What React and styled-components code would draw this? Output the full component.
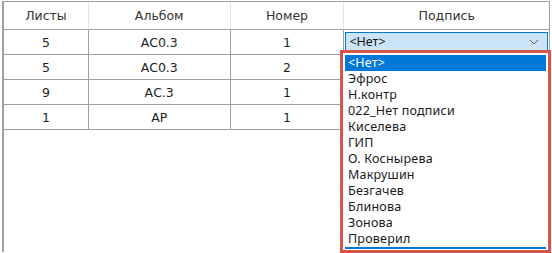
import styled, { createGlobalStyle } from 'styled-components'

const GlobalStyle = createGlobalStyle`
    html, body {
        margin: 0;
        padding: 0;
        background: #ffffff;
    }
    body {
        font-family: 'DejaVu Sans', 'Liberation Sans', sans-serif;
        color: #222222;
    }
`

const columns = [
    { key: 'sheets', title: 'Листы', width: 85 },
    { key: 'album', title: 'Альбом', width: 142 },
    { key: 'number', title: 'Номер', width: 114 },
    { key: 'sign', title: 'Подпись', width: 206 },
]

const rows = [
    { sheets: '5', album: 'АС0.3', number: '1' },
    { sheets: '5', album: 'АС0.3', number: '2' },
    { sheets: '9', album: 'АС.3', number: '1' },
    { sheets: '1', album: 'АР', number: '1' },
]

const options = [
    '<Нет>',
    'Эфрос',
    'Н.контр',
    '022_Нет подписи',
    'Киселева',
    'ГИП',
    'О. Коснырева',
    'Макрушин',
    'Безгачев',
    'Блинова',
    'Зонова',
    'Проверил',
]

const Chevron = () => (
    <svg width="10" height="6" viewBox="0 0 10 6">
        <path d="M1 1 L5 5 L9 1" fill="none" stroke="#5a5a5a" strokeWidth="1" />
    </svg>
)

export default function App() {
    return (
        <>
            <GlobalStyle />
            <Page>
                <Grid>
                    <Row>
                        {columns.map((c, i) => (
                            <HeadCell key={c.key} $w={c.width} $last={i === columns.length - 1}>
                                {c.title}
                            </HeadCell>
                        ))}
                    </Row>
                    {rows.map((r, ri) => (
                        <Row key={ri}>
                            <Cell $w={85}>{r.sheets}</Cell>
                            <Cell $w={142}>{r.album}</Cell>
                            <Cell $w={114}>{r.number}</Cell>
                            <Cell $w={206} $last>
                                {ri === 0 && (
                                    <Select>
                                        <span>&lt;Нет&gt;</span>
                                        <Chevron />
                                    </Select>
                                )}
                            </Cell>
                        </Row>
                    ))}
                </Grid>
                <Dropdown>
                    <List>
                        {options.map((o, i) => (
                            <Option key={o} $active={i === 0}>{o}</Option>
                        ))}
                    </List>
                </Dropdown>
            </Page>
        </>
    )
}

const Page = styled.div`
    position: relative;
    width: 550px;
    height: 253px;
    box-sizing: border-box;
    padding: 1px 0 0 2px;
`
const Grid = styled.div`
    display: flex;
    flex-direction: column;
    border-left: 2px solid #a0a0a0;
    border-top: 1px solid #a0a0a0;
    height: 251px;
    box-sizing: border-box;
`
const Row = styled.div`
    display: flex;
    &:first-child > div {
        height: 28px;
        border-bottom: 1px solid #a0a0a0;
    }
`
const HeadCell = styled.div`
    width: ${p => p.$w}px;
    box-sizing: border-box;
    display: flex;
    align-items: center;
    justify-content: center;
    font-size: 12.5px;
    color: #333333;
    border-right: 1px solid ${p => (p.$last ? '#a0a0a0' : '#e4e4e4')};
`
const Cell = styled.div`
    width: ${p => p.$w}px;
    height: 25px;
    box-sizing: border-box;
    display: flex;
    align-items: center;
    justify-content: center;
    font-size: 12.5px;
    color: #1e1e1e;
    border-right: 1px solid #a0a0a0;
    border-bottom: 1px solid #a0a0a0;
    padding: 1px;
`
const Select = styled.div`
    flex: 1;
    height: 19px;
    align-self: flex-start;
    margin-top: 1px;
    box-sizing: border-box;
    display: flex;
    align-items: center;
    justify-content: space-between;
    padding: 0 8px 0 3px;
    background: #cce4f7;
    border: 1px solid #0078d7;
    font-family: 'Noto Sans', 'Open Sans', sans-serif;
    font-size: 12.5px;
    color: #111111;
`
const Dropdown = styled.div`
    position: absolute;
    left: 340px;
    top: 50px;
    width: 211px;
    height: 203px;
    box-sizing: border-box;
    border: 3px solid #d6544a;
    background: #ffffff;
    padding: 1px 2px 1px 2px;
`
const List = styled.div`
    display: flex;
    flex-direction: column;
    border-bottom: 2px solid #0078d7;
    padding-top: 1px;
`
const Option = styled.div`
    height: 16px;
    line-height: 16px;
    padding-left: 3px;
    font-family: 'Noto Sans', 'Open Sans', sans-serif;
    font-size: 12.5px;
    letter-spacing: 0.2px;
    color: ${p => (p.$active ? '#ffffff' : '#1a1a1a')};
    background: ${p => (p.$active ? '#0078d7' : 'transparent')};
`
